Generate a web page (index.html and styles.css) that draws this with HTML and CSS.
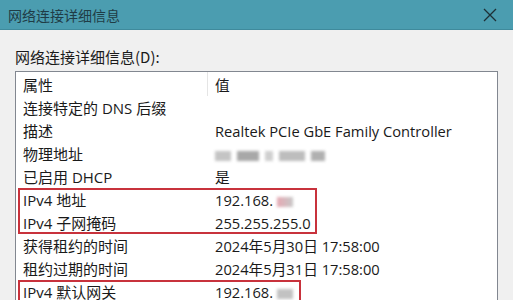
FILE: index.html
```html
<!DOCTYPE html>
<html lang="zh-CN">
<head>
    <meta charset="UTF-8">
    <title>网络连接详细信息</title>
    <link rel="stylesheet" href="styles.css">
</head>
<body>
    <div class="window">
        <div class="titlebar">
            <span class="title">网络连接详细信息</span>
            <svg class="close" width="14" height="14" viewBox="0 0 14 14">
                <path d="M1 1 L13 13 M13 1 L1 13" stroke="#1d2f36" stroke-width="1.3" fill="none"/>
            </svg>
        </div>
        <div class="content">
            <div class="label">网络连接详细信息(D):</div>
            <div class="listbox">
                <div class="row head">
                    <div class="cell prop">属性</div>
                    <div class="cell val">值</div>
                </div>
                <div class="row"><div class="cell prop">连接特定的 DNS 后缀</div><div class="cell val"></div></div>
                <div class="row"><div class="cell prop">描述</div><div class="cell val">Realtek PCIe GbE Family Controller</div></div>
                <div class="row"><div class="cell prop">物理地址</div><div class="cell val"><span class="blur b1"></span><span class="blur b2"></span><span class="blur b3"></span><span class="blur b4"></span><span class="blur b5"></span></div></div>
                <div class="row"><div class="cell prop">已启用 DHCP</div><div class="cell val">是</div></div>
                <div class="row"><div class="cell prop">IPv4 地址</div><div class="cell val">192.168.<span class="blur ip pink"></span></div></div>
                <div class="row"><div class="cell prop">IPv4 子网掩码</div><div class="cell val">255.255.255.0</div></div>
                <div class="row"><div class="cell prop">获得租约的时间</div><div class="cell val">2024年5月30日 17:58:00</div></div>
                <div class="row"><div class="cell prop">租约过期的时间</div><div class="cell val">2024年5月31日 17:58:00</div></div>
                <div class="row"><div class="cell prop">IPv4 默认网关</div><div class="cell val">192.168.<span class="blur ip"></span></div></div>

                <div class="mark mark-a"></div>
                <div class="mark mark-b"></div>
            </div>
        </div>
    </div>
</body>
</html>
```

FILE: styles.css
```css
* {
    box-sizing: border-box;
}

body {
    margin: 0;
    width: 513px;
    height: 300px;
    overflow: hidden;
    background: #f0f0f0;
    font-family: "Open Sans", "Noto Sans CJK SC", sans-serif;
    color: #1a1a1a;
}

.titlebar {
    height: 30px;
    background: #4b9db0;
    border-bottom: 1px solid #3f8a9c;
    display: flex;
    align-items: center;
    justify-content: space-between;
    padding: 0 16px 0 8px;
}

.title {
    font-size: 14px;
    color: #1f3c46;
    font-family: "Noto Sans CJK SC", sans-serif;
}

.content {
    padding: 17px 15px 0 15px;
}

.label {
    font-size: 15px;
    line-height: 20px;
    margin-bottom: 4px;
    font-family: "Noto Sans CJK SC", sans-serif;
}

.listbox {
    position: relative;
    background: #fff;
    border: 1px solid #828790;
    border-bottom: none;
    width: 483px;
    height: 240px;
}

.row {
    display: grid;
    grid-template-columns: 192px 1fr;
    height: 23px;
    align-items: center;
    font-size: 15px;
    white-space: nowrap;
}

.row.head {
    height: 24px;
}

.head .prop {
    border-right: 1px solid #e5e5e5;
    height: 100%;
    display: flex;
    align-items: center;
}

.cell.prop {
    padding-left: 7px;
}

.cell.val {
    padding-left: 7px;
    font-size: 14.7px;
}

.blur {
    display: inline-block;
    height: 10px;
    background: #b8b8b8;
    filter: blur(1.5px);
    vertical-align: middle;
    margin-right: 6px;
}

.b1 { width: 16px; background: #c4c4c4; }
.b2 { width: 22px; background: #a8a8a8; }
.b3 { width: 8px; background: #cfcfcf; }
.b4 { width: 26px; background: #bdbdbd; }
.b5 { width: 14px; background: #b0b0b0; }

.ip {
    width: 16px;
    margin-left: 4px;
    background: #c2c2c2;
}

.ip.pink {
    background: linear-gradient(to right, #e6a9b3, #c7c7c7);
}

.mark {
    position: absolute;
    border: 2px solid #c8323c;
    left: 2px;
}

.mark-a {
    top: 116px;
    width: 299px;
    height: 46px;
}

.mark-b {
    top: 208px;
    width: 283px;
    height: 40px;
}
```
